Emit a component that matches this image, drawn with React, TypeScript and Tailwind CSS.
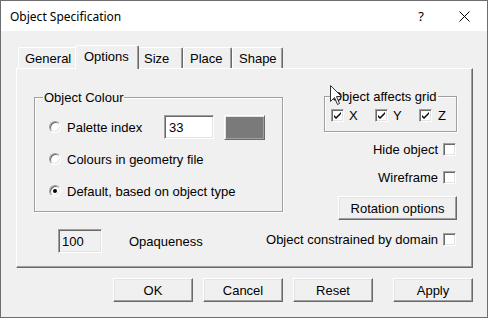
import React from "react";

const sunken = "border border-t-[#a0a0a0] border-l-[#a0a0a0] border-r-white border-b-white shadow-[inset_1px_1px_0_#696969,inset_-1px_-1px_0_#e3e3e3]";
const raised = "border border-t-white border-l-white border-r-[#696969] border-b-[#696969] shadow-[inset_-1px_-1px_0_#a0a0a0,inset_1px_1px_0_#e3e3e3]";

function Radio({ checked }: { checked?: boolean }) {
  return (
    <span className="relative flex h-[12px] w-[12px] shrink-0 items-center justify-center rounded-full border border-t-[#a0a0a0] border-l-[#a0a0a0] border-r-white border-b-white bg-white shadow-[inset_1px_1px_0_#696969,inset_-1px_-1px_0_#e3e3e3]">
      {checked ? <span className="h-[4px] w-[4px] rounded-full bg-black" /> : null}
    </span>
  );
}

function Check({ checked }: { checked?: boolean }) {
  return (
    <span className={`flex h-[13px] w-[13px] shrink-0 items-center justify-center bg-white ${sunken}`}>
      {checked ? (
        <svg width="9" height="9" viewBox="0 0 9 9">
          <path d="M1 4 L3 6 L8 1 L8 3 L3 8 L1 6 Z" fill="#000" />
        </svg>
      ) : null}
    </span>
  );
}

function Tab({ label, width, active }: { label: string; width: number; active?: boolean }) {
  return (
    <div
      style={{ width }}
      className={
        active
          ? "relative z-10 -mx-[2px] -mb-[1px] flex h-[24px] items-start rounded-t-[2px] border border-b-0 border-t-white border-l-white border-r-[#696969] bg-[#f0f0f0] pl-[8px] pt-[3px] shadow-[inset_-1px_0_0_#a0a0a0]"
          : "flex h-[21px] items-start rounded-t-[2px] border border-b-0 border-t-white border-l-white border-r-[#696969] bg-[#f0f0f0] pl-[6px] pt-[3px] shadow-[inset_-1px_0_0_#a0a0a0]"
      }
    >
      {label}
    </div>
  );
}

function Button({ children, w = 80 }: { children: React.ReactNode; w?: number }) {
  return (
    <div style={{ width: w }} className={`flex h-[24px] items-center justify-center bg-[#f0f0f0] ${raised}`}>
      {children}
    </div>
  );
}

export default function App() {
  return (
    <div className="relative flex h-[318px] w-[488px] flex-col whitespace-nowrap border border-[#6e6e70] bg-[#f0f0f0] text-[13px] leading-[15px] text-black [font-family:'Liberation_Sans',Arial,sans-serif]">
      {/* title bar */}
      <div className="flex h-[30px] shrink-0 items-center bg-white pl-[9px] pr-[17px]">
        <span className="text-[12px] [font-family:'Noto_Sans',sans-serif]">Object Specification</span>
        <span className="ml-auto text-[13px] [font-family:'Noto_Sans',sans-serif]">?</span>
        <svg className="ml-[35px]" width="11" height="11" viewBox="0 0 11 11">
          <path d="M0.5 0.5 L10.5 10.5 M10.5 0.5 L0.5 10.5" stroke="#000" strokeWidth="1" />
        </svg>
      </div>

      <div className="flex flex-col pl-[15px] pt-[14px]">
        {/* tabs */}
        <div className="flex h-[23px] items-end pl-[2px]">
          <Tab label="General" width={59} />
          <Tab label="Options" width={64} active />
          <Tab label="Size" width={46} />
          <Tab label="Place" width={49} />
          <Tab label="Shape" width={51} />
        </div>

        {/* panel */}
        <div className="flex h-[200px] w-[457px] border border-t-white border-l-white border-r-[#696969] border-b-[#696969] shadow-[inset_-1px_-1px_0_#a0a0a0]">
          {/* left column */}
          <div className="flex shrink-0 flex-col pl-[17px] pt-[28px]">
            <div className="relative flex h-[115px] w-[249px] flex-col gap-[8px] border border-[#a0a0a0] pl-[14px] pt-[17px] shadow-[inset_1px_1px_0_white,1px_1px_0_white]">
              <span className="absolute -top-[8px] left-[8px] bg-[#f0f0f0] px-[1px]">Object Colour</span>
              <div className="flex h-[24px] items-center">
                <Radio />
                <span className="ml-[6px] w-[97px]">Palette index</span>
                <div className={`flex h-[24px] w-[50px] items-center bg-white pl-[4px] ${sunken}`}>33</div>
                <div className="ml-[10px] h-[25px] w-[41px] border border-t-white border-l-white border-r-[#696969] border-b-[#696969] bg-[#7a7a7a] shadow-[inset_1px_1px_0_#e3e3e3,inset_-1px_-1px_0_#a0a0a0]" />
              </div>
              <div className="flex h-[24px] items-center">
                <Radio />
                <span className="ml-[6px]">Colours in geometry file</span>
              </div>
              <div className="flex h-[24px] items-center">
                <Radio checked />
                <span className="ml-[6px]">Default, based on object type</span>
              </div>
            </div>
            <div className="ml-[24px] mt-[17px] flex items-center">
              <div className={`flex h-[24px] w-[44px] items-center bg-[#f0f0f0] pl-[3px] ${sunken}`}>100</div>
              <span className="ml-[27px]">Opaqueness</span>
            </div>
          </div>

          {/* right column */}
          <div className="ml-auto flex w-[149px] shrink-0 flex-col items-end pr-[15px] pt-[27px]">
            <div className="relative flex h-[36px] w-[133px] shrink-0 items-center border border-[#a0a0a0] pl-[6px] pt-[3px] shadow-[inset_1px_1px_0_white,1px_1px_0_white]">
              <span className="absolute -top-[8px] left-[6px] bg-[#f0f0f0] px-[1px]">Object affects grid</span>
              <div className="flex w-[44px] items-center gap-[5px]"><Check checked />X</div>
              <div className="flex w-[44px] items-center gap-[5px]"><Check checked />Y</div>
              <div className="flex items-center gap-[6px]"><Check checked />Z</div>
            </div>
            <div className="mt-[10px] flex items-center gap-[5px] pr-[1px]">
              Hide object <Check />
            </div>
            <div className="mt-[13px] flex items-center gap-[5px] pr-[1px]">
              Wireframe <Check />
            </div>
            <div className="mt-[11px]">
              <Button w={119}>Rotation options</Button>
            </div>
            <div className="mt-[12px] flex shrink-0 items-center gap-[5px] pr-[1px]">
              Object constrained by domain <Check />
            </div>
          </div>
        </div>

        {/* buttons */}
        <div className="mt-[10px] flex w-[457px] justify-end">
          <Button>OK</Button>
          <div className="ml-[10px]"><Button>Cancel</Button></div>
          <div className="ml-[10px]"><Button>Reset</Button></div>
          <div className="ml-[20px]"><Button>Apply</Button></div>
        </div>
      </div>

      {/* mouse cursor */}
      <svg className="absolute left-[329px] top-[84px]" width="13" height="21" viewBox="0 0 13 21">
        <path d="M0.5 0.5 L0.5 16.5 L4.5 12.5 L7.5 19.5 L9.5 18.5 L6.5 11.5 L11.5 11.5 Z" fill="#fff" stroke="#333" strokeWidth="1" />
      </svg>
    </div>
  );
}
